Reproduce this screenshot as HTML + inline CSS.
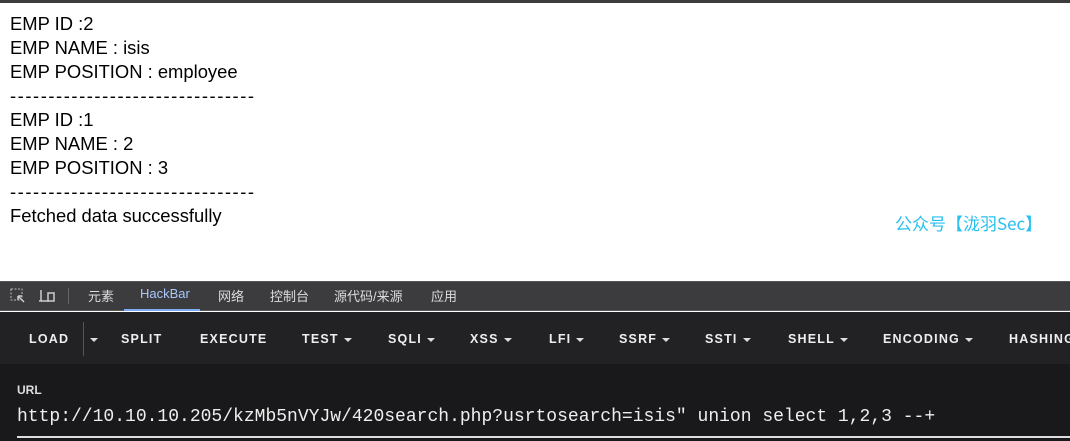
<!DOCTYPE html>
<html><head><meta charset="utf-8"><style>
body{margin:0;width:1070px;height:441px;overflow:hidden;background:#fff;font-family:"Liberation Sans","Noto Sans CJK SC",sans-serif;position:relative}
.top{position:absolute;left:0;top:0;width:1070px;height:3px;background:#3c3c3c}
.out{position:absolute;left:10px;top:12px;font-size:18.4px;line-height:24px;color:#000}
.d{letter-spacing:1.55px}
.wm{position:absolute;left:895px;top:210px;font-size:17px;color:#29c0f0;font-family:"Noto Sans CJK SC","Liberation Sans",sans-serif}
.tabs{position:absolute;left:0;top:281px;width:1070px;height:30px;background:#3c3b3e;border-top:1px solid #555;border-bottom:1px solid #5a5a5a;box-sizing:border-box;font-size:13px;color:#ddd;font-family:"Liberation Sans","Noto Sans CJK SC",sans-serif}
.tabs span{position:absolute;top:4px}
.tb{position:absolute;left:0;top:312px;width:1070px;height:52px;background:#222124;color:#eee;font-weight:bold;font-size:12.5px;letter-spacing:1.2px}
.tb span{position:absolute;top:20px}
.tri{display:inline-block;width:0;height:0;border-left:4px solid transparent;border-right:4px solid transparent;border-top:4px solid #ddd;vertical-align:middle;margin-left:5px}
.url{position:absolute;left:0;top:364px;width:1070px;height:77px;background:#19191b}
</style></head><body>
<div class="top"></div>
<div class="out">EMP ID :2<br>EMP NAME : isis<br>EMP POSITION : employee<br><span class="d">--------------------------------</span><br>EMP ID :1<br>EMP NAME : 2<br>EMP POSITION : 3<br><span class="d">--------------------------------</span><br>Fetched data successfully</div>
<div class="wm">公众号【泷羽Sec】</div>
<div class="tabs">
<svg style="position:absolute;left:10px;top:6px" width="16" height="16"><rect x="1" y="1" width="11" height="11" fill="none" stroke="#bbb" stroke-dasharray="2 1.5"/><path d="M8 8l6 6M8 8h4M8 8v4" stroke="#ccc" stroke-width="1.5"/></svg>
<svg style="position:absolute;left:38px;top:6px" width="18" height="16"><path d="M3 2v11h7M1 13h10" stroke="#ccc" stroke-width="1.5" fill="none"/><rect x="10" y="5" width="6" height="8" fill="none" stroke="#ccc" stroke-width="1.5"/></svg>
<div style="position:absolute;left:68px;top:6px;width:1px;height:16px;background:#666"></div>
<span style="left:88px">元素</span>
<span style="left:140px;color:#a8c7fa">HackBar</span>
<div style="position:absolute;left:124px;top:27px;width:76px;height:2px;background:#7cacf8"></div>
<span style="left:218px">网络</span>
<span style="left:270px">控制台</span>
<span style="left:334px">源代码/来源</span>
<span style="left:431px">应用</span>
</div>
<div class="tb">
<span style="left:29px">LOAD</span>
<div style="position:absolute;left:83px;top:10px;width:1px;height:34px;background:#555"></div>
<span style="left:85px"><i class="tri"></i></span>
<span style="left:121px">SPLIT</span>
<span style="left:200px">EXECUTE</span>
<span style="left:302px">TEST<i class="tri"></i></span>
<span style="left:388px">SQLI<i class="tri"></i></span>
<span style="left:470px">XSS<i class="tri"></i></span>
<span style="left:549px">LFI<i class="tri"></i></span>
<span style="left:619px">SSRF<i class="tri"></i></span>
<span style="left:705px">SSTI<i class="tri"></i></span>
<span style="left:788px">SHELL<i class="tri"></i></span>
<span style="left:883px">ENCODING<i class="tri"></i></span>
<span style="left:1009px">HASHING</span>
</div>
<div class="url">
<div style="position:absolute;left:17px;top:19px;font-size:12px;font-weight:bold;color:#ddd">URL</div>
<div style="position:absolute;left:17px;top:43px;font-family:'Liberation Mono',monospace;font-size:18px;color:#eee;white-space:pre">http://10.10.10.205/kzMb5nVYJw/420search.php?usrtosearch=isis" union select 1,2,3 --+</div>
<div style="position:absolute;left:17px;top:72px;width:1053px;height:2px;background:#ddd"></div>
</div>
</body></html>
